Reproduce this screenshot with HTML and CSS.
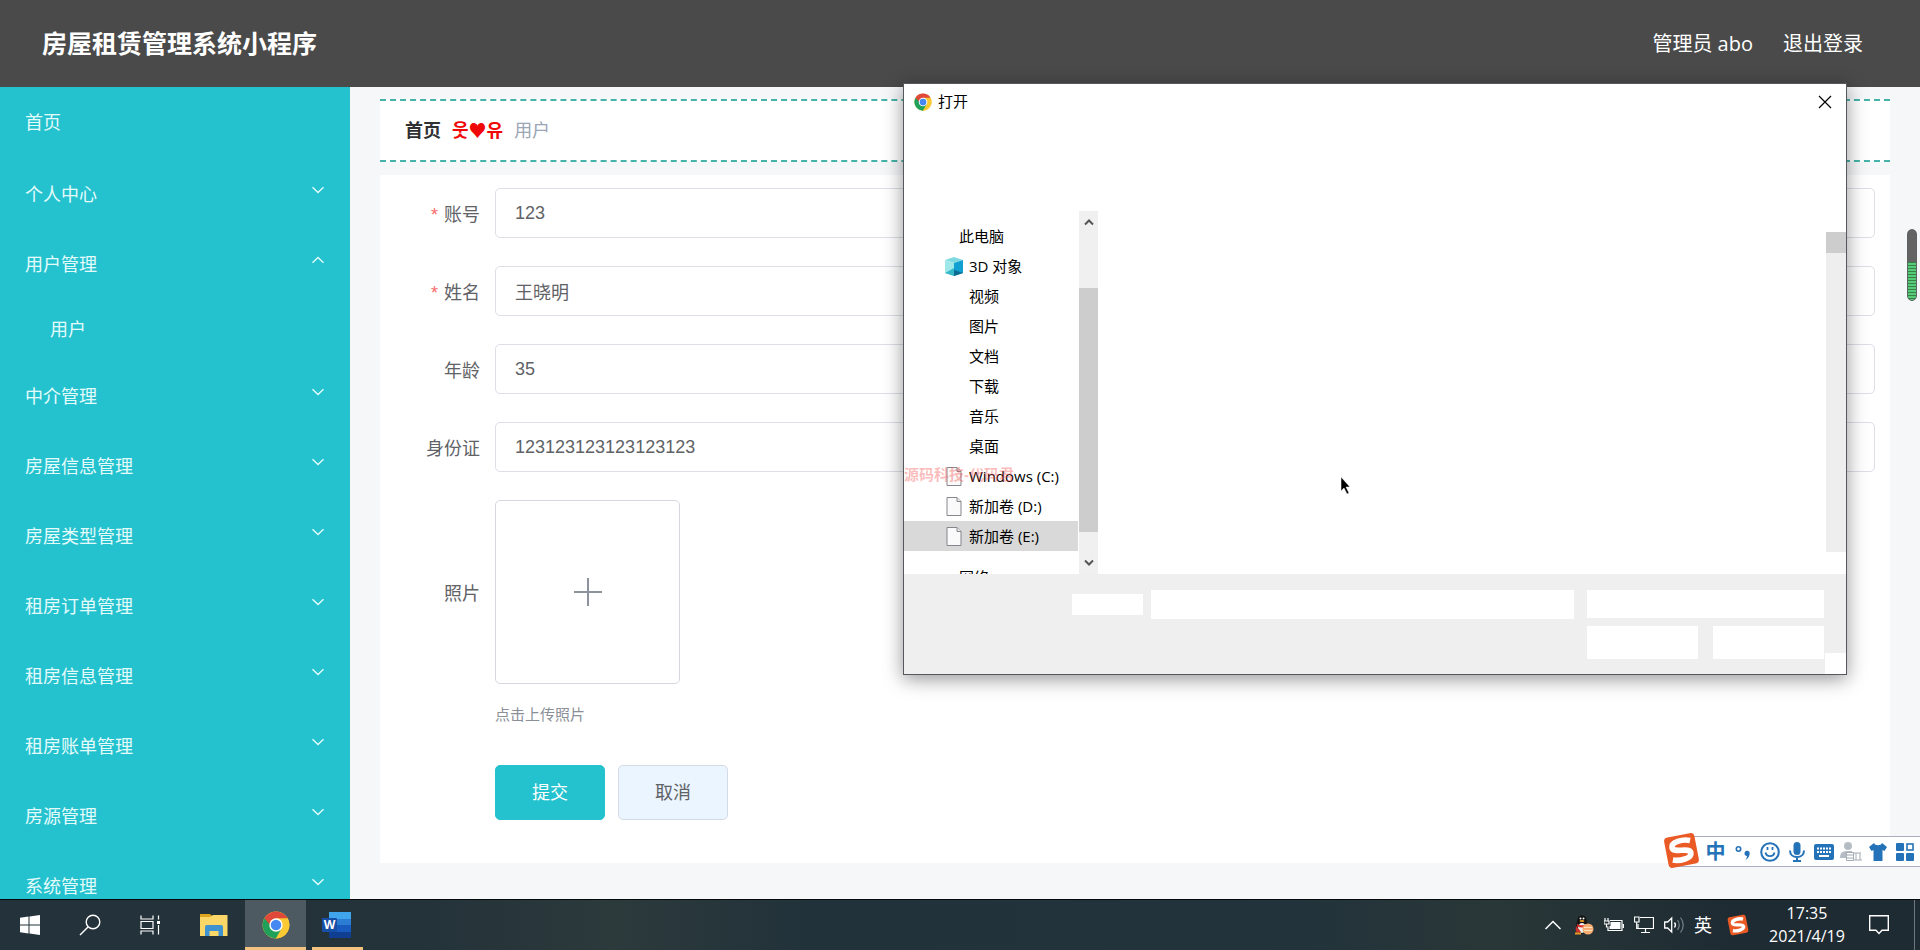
FILE: index.html
```html
<!DOCTYPE html>
<html lang="zh-CN">
<head>
<meta charset="utf-8">
<title>房屋租赁管理系统小程序</title>
<link rel="stylesheet" href="styles.css">
</head>
<body>
<svg class="defs" aria-hidden="true">
  <symbol id="chevron" viewBox="0 0 14 8"><path d="M1.5 1.2 7 6.6l5.500-5.400" fill="none" stroke="currentColor" stroke-width="1.400"/></symbol>
  <symbol id="chrome" viewBox="0 0 48 48">
    <circle cx="24" cy="24" r="23" fill="#fbc934"/>
    <path d="M24 24 4.100 12.500A23 23 0 0 0 24 47l10-17.300z" fill="#1fa15a"/>
    <path d="M24 24H14L4.100 12.500A23 23 0 0 1 43.900 12.500z" fill="#e0483a"/>
    <path d="M24 12.500h19.900A23 23 0 0 1 24 47l10-17.300z" fill="#fbc934"/>
    <circle cx="24" cy="24" r="11.500" fill="#fff"/>
    <circle cx="24" cy="24" r="9" fill="#4688f1"/>
  </symbol>
  <symbol id="file" viewBox="0 0 15 19"><path d="M.5.5h10l4 4v14H.5z" fill="#fafafa" stroke="#85878d"/><path d="M10.500.5v4h4" fill="#e8e8e8" stroke="#85878d"/></symbol>
  <symbol id="sogou" viewBox="0 0 36 36">
    <g transform="rotate(-11 18 18)"><rect x="3" y="3" width="30" height="30" rx="4" fill="#ea5a25"/>
    <path d="M28 10C21 7 9.500 8 9.500 13.500c0 6 17 2.500 17 8.500 0 5.500-12 6-18.500 3.500" fill="none" stroke="#fff" stroke-width="5.500"/></g>
  </symbol>
</svg>

<div class="desktop">
  <header class="topbar">
    <h1 class="topbar-title">房屋租赁管理系统小程序</h1>
    <nav class="topbar-links"><a href="#">管理员 abo</a><a href="#">退出登录</a></nav>
  </header>

  <div class="page">
    <nav class="sidebar">
      <a class="menu-item menu-home" href="#">首页</a>
      <button class="menu-item">个人中心<svg class="arrow"><use href="#chevron"/></svg></button>
      <button class="menu-item">用户管理<svg class="arrow arrow-up"><use href="#chevron"/></svg></button>
      <a class="menu-item menu-sub" href="#">用户</a>
      <button class="menu-item">中介管理<svg class="arrow"><use href="#chevron"/></svg></button>
      <button class="menu-item">房屋信息管理<svg class="arrow"><use href="#chevron"/></svg></button>
      <button class="menu-item">房屋类型管理<svg class="arrow"><use href="#chevron"/></svg></button>
      <button class="menu-item">租房订单管理<svg class="arrow"><use href="#chevron"/></svg></button>
      <button class="menu-item">租房信息管理<svg class="arrow"><use href="#chevron"/></svg></button>
      <button class="menu-item">租房账单管理<svg class="arrow"><use href="#chevron"/></svg></button>
      <button class="menu-item">房源管理<svg class="arrow"><use href="#chevron"/></svg></button>
      <button class="menu-item">系统管理<svg class="arrow"><use href="#chevron"/></svg></button>
    </nav>

    <main class="main">
      <nav class="breadcrumb"><a class="crumb-home" href="#">首页</a><span class="crumb-sep">웃♥유</span><span>用户</span></nav>
      <form class="card">
        <label class="label required" for="account">账号</label>
        <input class="field" id="account" value="123">
        <label class="label required" for="name">姓名</label>
        <input class="field" id="name" value="王晓明">
        <label class="label" for="age">年龄</label>
        <input class="field" id="age" value="35">
        <label class="label" for="idcard">身份证</label>
        <input class="field" id="idcard" value="123123123123123123">
        <label class="label" for="photo">照片</label>
        <button class="upload" id="photo" type="button" aria-label="上传照片">
          <svg width="30" height="30" viewBox="0 0 30 30"><path d="M15 1v28M1 15h28" stroke="#8c939d" stroke-width="2"/></svg>
        </button>
        <p class="tip">点击上传照片</p>
        <div class="actions">
          <button class="btn btn-primary" type="button">提交</button>
          <button class="btn" type="button">取消</button>
        </div>
      </form>
    </main>
  </div>

  <section class="dialog" aria-label="打开">
    <div class="dialog-head">
      <svg width="18" height="18"><use href="#chrome"/></svg>
      <span class="dialog-title">打开</span>
      <button class="dialog-close" aria-label="关闭"><svg width="14" height="14" viewBox="0 0 14 14"><path d="m1 1 12 12M13 1 1 13" stroke="#000" stroke-width="1.200"/></svg></button>
    </div>
    <div class="dialog-body">
      <ul class="tree">
        <li class="tree-root">此电脑</li>
        <li><svg width="18" height="19" viewBox="0 0 18 19"><path d="m0 3 9-3 9 3-9 3z" fill="#7fd9e0"/><path d="M0 3l9 3v13l-9-3z" fill="#9fe8ea"/><path d="m18 3-9 3v13l9-3z" fill="#0f9fd0"/><path d="m0 16 9-5v8z" fill="#35b9c9"/><path d="m9 13 9 3-9 3z" fill="#0b6b91"/></svg>3D 对象</li>
        <li>视频</li>
        <li>图片</li>
        <li>文档</li>
        <li>下载</li>
        <li>音乐</li>
        <li>桌面</li>
        <li><svg width="15" height="19"><use href="#file"/></svg>Windows (C:)</li>
        <li><svg width="15" height="19"><use href="#file"/></svg>新加卷 (D:)</li>
        <li class="selected"><svg width="15" height="19"><use href="#file"/></svg>新加卷 (E:)</li>
        <li class="tree-root tree-network">网络</li>
      </ul>
      <div class="tree-scroll">
        <svg class="scroll-arrow arrow-up" viewBox="0 0 10 8"><path d="m1 1.500 4 4 4-4" fill="none" stroke="#555" stroke-width="2"/></svg>
        <div class="scroll-thumb"></div>
        <svg class="scroll-arrow" viewBox="0 0 10 8"><path d="m1 1.500 4 4 4-4" fill="none" stroke="#555" stroke-width="2"/></svg>
      </div>
      <div class="file-list"><div class="list-scroll"><div class="list-thumb"></div></div></div>
    </div>
    <div class="dialog-foot">
      <div class="foot-label"></div>
      <input class="foot-name" aria-label="文件名">
      <div class="foot-side">
        <select class="foot-type" aria-label="文件类型"></select>
        <button class="foot-btn" aria-label="打开"></button>
        <button class="foot-btn" aria-label="取消"></button>
      </div>
      <div class="grip"></div>
    </div>
    <span class="watermark">源码科技-代码君</span>
  </section>

  <div class="meter"></div>
  <svg class="cursor" width="13" height="20" viewBox="0 0 13 20"><path d="M1 0v14l3-3 3 6 2-1-3-6h4z" fill="#000" stroke="#fff" stroke-width=".5"/></svg>

  <div class="ime">
    <svg class="ime-logo"><use href="#sogou"/></svg>
    <button class="ime-btn" aria-label="中文"><span>中</span></button>
    <button class="ime-btn" aria-label="标点"><svg width="16" height="20" viewBox="0 0 16 20"><circle cx="3.500" cy="7" r="2.200" fill="none" stroke="#2473b8" stroke-width="1.600"/><path d="M9.500 11a2.600 2.600 0 1 1 5.100 1c-.3 2.800-1.700 4.800-4.300 6 1.200-1.500 1.700-2.800 1.700-4A2.500 2.500 0 0 1 9.500 11z" fill="#2473b8"/></svg></button>
    <button class="ime-btn" aria-label="表情"><svg width="20" height="20" viewBox="0 0 20 20"><circle cx="10" cy="10" r="8.800" fill="none" stroke="#2473b8" stroke-width="2"/><path d="M5.500 10.500a4.600 4.600 0 0 0 9 0M7.500 5v3M12.500 5v3" fill="none" stroke="#2473b8" stroke-width="1.800"/></svg></button>
    <button class="ime-btn" aria-label="语音"><svg width="16" height="20" viewBox="0 0 16 20"><rect x="4.500" width="7" height="13" rx="3.500" fill="#2473b8"/><path d="M1 8.500c0 4 3 6.500 7 6.500s7-2.500 7-6.500M8 15v4M4 19h8" fill="none" stroke="#2473b8" stroke-width="2"/></svg></button>
    <button class="ime-btn" aria-label="键盘"><svg width="20" height="16" viewBox="0 0 20 16"><rect width="20" height="16" rx="2" fill="#2473b8"/><path d="M3 4.500h14M3 8h14" stroke="#fff" stroke-width="2" stroke-dasharray="2 1"/><path d="M5 12h10" stroke="#fff" stroke-width="2"/></svg></button>
    <button class="ime-btn" aria-label="用户"><svg width="22" height="20" viewBox="0 0 22 20"><circle cx="8" cy="4" r="4" fill="#b5bcc4"/><path d="M0 16c0-6 3-7 8-7h4v7z" fill="#b5bcc4"/><path d="M6.500 10.500h7v8h-7zM6.500 13h7M6.500 16h7M14 11h7M16 11v7M20 11v7M14 18h8" fill="#fff" stroke="#a4acb5"/></svg></button>
    <button class="ime-btn" aria-label="皮肤"><svg width="18" height="18" viewBox="0 0 18 18"><path d="M5 0c1 3 7 3 8 0l5 4-2.500 4-2-1v11h-9V7l-2 1L0 4z" fill="#2473b8"/></svg></button>
    <button class="ime-btn" aria-label="工具箱"><svg width="18" height="18" viewBox="0 0 18 18"><rect width="8" height="8" rx="1" fill="#2473b8"/><rect y="10" width="8" height="8" rx="1" fill="#2473b8"/><rect x="10" y="10" width="8" height="8" rx="1" fill="#2473b8"/><rect x="11" y="1" width="6" height="6" fill="none" stroke="#2473b8" stroke-width="1.600"/></svg></button>
  </div>

  <footer class="taskbar">
    <button class="task" aria-label="开始"><svg width="20" height="20" viewBox="0 0 20 20"><path d="M0 2.800 8.500 1.600v7.900H0zM9.500 1.400 20 0v9.500H9.500zM0 10.500h8.500v7.900L0 17.200zM9.500 10.500H20V20L9.500 18.600z" fill="#fff"/></svg></button>
    <button class="task" aria-label="搜索"><svg width="22" height="22" viewBox="0 0 22 22"><circle cx="14" cy="8" r="6.800" fill="none" stroke="#fff" stroke-width="1.400"/><path d="M9 13 1 21" stroke="#fff" stroke-width="1.400"/></svg></button>
    <button class="task" aria-label="任务视图"><svg width="20" height="20" viewBox="0 0 20 20"><path d="M1 .5v3.500h12V.5M1 19.500V16h12v3.500M1 6.500h12v7H1zM18.500.5v4M18.500 10v9.500" fill="none" stroke="#fff" stroke-width="1.200"/><path d="M17 6h3v3h-3z" fill="#fff"/></svg></button>
    <button class="task task-app" aria-label="文件资源管理器"><svg width="28" height="24" viewBox="0 0 28 24"><path d="M0 1h10l2 2h15v20H0z" fill="#e0a51f"/><path d="M0 4h10l3-2h14.500v21H0z" fill="#fbd768"/><path d="M5 23V14q0-2 2-2h14q2 0 2 2v9h-4.500v-5h-9v5z" fill="#3e92d0"/></svg></button>
    <button class="task task-app active" aria-label="Chrome"><svg width="28" height="28"><use href="#chrome"/></svg></button>
    <button class="task task-app running" aria-label="Word"><svg width="30" height="28" viewBox="0 0 30 28"><path d="M7 1h22v7H7z" fill="#41a5ee"/><path d="M7 8h22v6H7z" fill="#2b7cd3"/><path d="M7 14h22v7H7z" fill="#185abd"/><path d="M7 21h22v6H7z" fill="#103f91"/><rect y="7" width="15" height="14" rx="1" fill="#174ea6"/><text x="7.500" y="18" class="word-letter">W</text></svg></button>

    <div class="tray">
      <svg class="tray-more" width="16" height="10" viewBox="0 0 16 10"><path d="m.5 9 7.500-7.500L15.500 9" fill="none" stroke="#fff" stroke-width="1.500"/></svg>
      <svg width="20" height="20" viewBox="0 0 20 20"><ellipse cx="8" cy="11" rx="6" ry="8" fill="#171717"/><circle cx="8" cy="5" r="4.500" fill="#111"/><ellipse cx="8" cy="13" rx="4" ry="5" fill="#eee"/><path d="M3 9q5 2.500 10 0v2.500q-5 2-10 0z" fill="#d9312c"/><circle cx="6.500" cy="3.500" r="1" fill="#fff"/><circle cx="9.500" cy="3.500" r="1" fill="#fff"/><ellipse cx="8" cy="6" rx="2.500" ry="1" fill="#e99a24"/><path d="M2 11q3 3 5 6l-4 1q-2-2-1-7z" fill="#c9302c"/><path d="M1 18.500h6" stroke="#e99a24" stroke-width="2"/><circle cx="14" cy="14" r="5.500" fill="#f3ad72"/><path d="M10 12.500h8M10 15.500h8" stroke="#ffe0bd"/></svg>
      <svg width="20" height="16" viewBox="0 0 20 16"><path d="M1 1v3M4 1v3M0 4h5v3H0zM2.500 7v3h2" fill="none" stroke="#fff" stroke-width="1.200"/><path d="M6 3.500h12v10H4v-3" fill="none" stroke="#fff" stroke-width="1.200"/><path d="M6.500 5h10v7h-11V9h1z" fill="#fff"/><path d="M19.300 7v4" stroke="#fff" stroke-width="1.400"/></svg>
      <svg width="20" height="18" viewBox="0 0 20 18"><path d="M6 1.500h13.500v11H4V8M11.500 12.500V17M7 16.500h9" fill="none" stroke="#fff" stroke-width="1.200"/><path d="M.5 1h4.500v5H.5zM2.700 6v6.500H5" fill="none" stroke="#fff" stroke-width="1.200"/></svg>
      <svg width="20" height="18" viewBox="0 0 20 18"><path d="M.7 6h3l4-4v14l-4-4h-3z" fill="none" stroke="#fff" stroke-width="1.300"/><path d="M10.500 6.500q2 2.500 0 5" fill="none" stroke="#fff" stroke-width="1.300"/><path d="M13.500 4q3.500 5 0 10M16.500 1.500q5.500 7.500 0 15" fill="none" stroke="#75828a" stroke-width="1.200"/></svg>
      <span class="tray-lang">英</span>
      <svg class="tray-sogou" width="22" height="22"><use href="#sogou"/></svg>
      <div class="clock"><span>17:35</span><span>2021/4/19</span></div>
      <svg class="tray-note" width="20" height="20" viewBox="0 0 20 20"><path d="M.7.7h18.600v14.600h-6.300L10 18.500 7 15.300H.7z" fill="none" stroke="#fff" stroke-width="1.400"/></svg>
      <span class="tray-edge"></span>
    </div>
  </footer>
</div>
</body>
</html>
```
FILE: styles.css
```css
* { box-sizing: border-box; }
body {
  margin: 0;
  font-family: "Liberation Sans", "Noto Sans CJK SC", sans-serif;
  font-size: 18px;
  color: #606266;
}
button, input, select { font: inherit; color: inherit; margin: 0; padding: 0; border: 0; background: none; }
a { color: inherit; text-decoration: none; }
svg { display: block; flex: none; }
.defs { position: absolute; width: 0; height: 0; }

.desktop { position: relative; display: flex; flex-direction: column; height: 100vh; overflow: hidden; }

.topbar {
  flex: none;
  display: flex;
  align-items: center;
  justify-content: space-between;
  height: 87px;
  padding: 0 57px 3px 42px;
  background: #4a4a4a;
  color: #fff;
}
.topbar-title { margin: 0; font-size: 25px; font-weight: 700; }
.topbar-links { display: flex; gap: 30px; font-family: "Open Sans", "Noto Sans CJK SC", sans-serif; font-size: 20px; }

.page { flex: 1; min-height: 0; display: flex; }

.sidebar { flex: none; width: 350px; overflow: hidden; background: #24c2ce; color: #e4fbfc; }
.menu-item {
  display: flex;
  align-items: center;
  justify-content: space-between;
  width: 100%;
  height: 70px;
  padding: 0 25px 2px;
  text-align: left;
}
.menu-home { margin-bottom: 2px; }
.menu-sub { height: 62px; padding: 0 50px 5px; }
.arrow { width: 14px; height: 8px; margin-bottom: 6px; }
.arrow-up { transform: rotate(180deg); }

.main { flex: 1; min-width: 0; padding: 12px 30px 0; background: #f5f7f9; }
.breadcrumb {
  display: flex;
  align-items: center;
  gap: 11px;
  height: 63px;
  margin-bottom: 13px;
  padding: 0 25px 3px;
  border-top: 2px dashed #45b3a9;
  border-bottom: 2px dashed #45b3a9;
  background: #fff;
  color: #9aa5b5;
}
.crumb-home { color: #303133; font-weight: 700; }
.crumb-sep { color: #f00808; font-family: "Noto Sans CJK KR", sans-serif; font-weight: 700; }

.card {
  display: grid;
  grid-template-columns: 100px 1fr;
  align-items: center;
  column-gap: 15px;
  row-gap: 28px;
  padding: 13px 15px 43px 0;
  background: #fff;
}
.label { text-align: right; }
.required::before { content: "*"; margin-right: 6px; color: #f56c6c; }
.field {
  width: 100%;
  height: 50px;
  padding: 0 19px;
  border: 1px solid #dcdfe6;
  border-radius: 5px;
  background: #fff;
}
.upload {
  display: grid;
  place-items: center;
  width: 185px;
  height: 184px;
  border: 1px solid #d5d8de;
  border-radius: 5px;
}
.tip { grid-column: 2; margin: -8px 0 11px; font-size: 15px; line-height: 22px; color: #8b8f97; }
.actions { grid-column: 2; display: flex; gap: 13px; }
.btn { width: 110px; height: 55px; padding-bottom: 4px; border: 1px solid #d5dbe4; border-radius: 5px; background: #eaf5ff; }
.btn-primary { border-color: #24c2ce; background: #24c2ce; color: #fff; }

.dialog {
  position: absolute;
  top: 83px;
  right: 73px;
  width: 944px;
  display: flex;
  flex-direction: column;
  border: 1px solid #55585c;
  background: #fff;
  box-shadow: 0 4px 18px rgba(0, 0, 0, .42);
  font-family: "Open Sans", "Noto Sans CJK SC", sans-serif;
  font-size: 15px;
  color: #000;
}
.dialog-head { display: flex; align-items: center; gap: 6px; height: 36px; margin-bottom: 91px; padding: 0 14px 0 10px; }
.dialog-title { flex: 1; line-height: 20px; padding-bottom: 2px; }
.dialog-body { display: flex; height: 363px; }
.tree { flex: none; width: 174px; margin: 0; padding: 10px 0 0; overflow: hidden; list-style: none; }
.tree li { display: flex; align-items: center; height: 30px; padding-left: 65px; line-height: 30px; }
.tree svg { width: 18px; margin: 0 6px 0 -24px; }
.tree .tree-root { padding-left: 55px; }
.tree .selected { background: #d9d9d9; }
.tree .tree-network { margin-top: 11px; }
.tree-scroll {
  flex: none;
  display: flex;
  flex-direction: column;
  align-items: center;
  justify-content: space-between;
  width: 19px;
  margin-left: 1px;
  padding: 7px 0;
  background: #f0f0f0;
}
.scroll-arrow { width: 10px; height: 8px; }
.scroll-thumb { width: 19px; height: 244px; margin-top: 34px; background: #cdcdcd; }
.file-list { flex: 1; display: flex; justify-content: flex-end; padding: 21px 0 22px; }
.list-scroll { width: 20px; background: #eee; }
.list-thumb { height: 21px; background: #cdcdcd; }
.dialog-foot {
  position: relative;
  display: flex;
  align-items: flex-start;
  height: 100px;
  padding: 16px 22px 0 168px;
  background: #efefef;
}
.foot-label { width: 71px; height: 21px; margin: 4px 8px 0 0; background: #fff; }
.foot-name { flex: 1; min-width: 0; height: 29px; margin-right: 13px; background: #fff; }
.foot-side { display: grid; grid-template-columns: 111px 111px; column-gap: 15px; row-gap: 8px; }
.foot-type { grid-column: 1 / 3; height: 28px; background: #fff; appearance: none; }
.foot-btn { height: 33px; background: #fff; }
.grip { position: absolute; right: 0; bottom: 0; width: 21px; height: 21px; background: #fff; }
.watermark {
  position: absolute;
  top: 380px;
  left: 0;
  font-family: "Liberation Sans", "Noto Sans CJK SC", sans-serif;
  font-weight: 700;
  line-height: 22px;
  color: rgba(245, 60, 60, .34);
}

.meter {
  position: absolute;
  top: 229px;
  right: 3px;
  width: 10px;
  height: 72px;
  border: 1px solid #5f6462;
  border-radius: 5px;
  background:
    linear-gradient(#636363 32px, transparent 32px),
    repeating-linear-gradient(#56cc78 0 2px, #36804c 2px 3px);
}
.cursor { position: absolute; left: 1340px; top: 477px; }

.ime {
  position: absolute;
  right: 0;
  bottom: 83px;
  display: flex;
  height: 31px;
  padding: 1px 2px 0 26px;
  border-top: 1px solid #abadc0;
  border-bottom: 1px solid #abadc0;
  background: #fff;
}
.ime-logo { position: absolute; left: -13px; top: -5px; width: 37px; height: 37px; }
.ime-btn { display: grid; place-items: center; width: 27px; color: #2473b8; font-size: 20px; font-weight: 700; line-height: 28px; }

.taskbar {
  flex: none;
  display: flex;
  height: 51px;
  border-top: 1px solid #05090b;
  background: linear-gradient(90deg, #24333b 0, #24323a 22%, #2c3a3c 32%, #22323a 42%, #22333b 68%, #2a3738 78%, #1e2b33 90%);
  color: #fff;
}
.task { display: grid; place-items: center; width: 60px; }
.task-app { position: relative; margin-left: 1px; }
.task-app:nth-child(4) { margin-left: 4px; }
.active { width: 61px; background: #4e5a62; }
.active::after, .running::after { content: ""; position: absolute; bottom: 0; left: 0; right: 0; height: 3px; background: #f4c27f; }
.running::after { left: 5px; right: 4px; }
.word-letter { fill: #fff; font: 700 12px "Open Sans", sans-serif; text-anchor: middle; }
.tray { display: flex; align-items: center; gap: 10px; margin-left: auto; font-family: "Open Sans", "Noto Sans CJK SC", sans-serif; }
.tray-more { margin-right: 3px; }
.tray-sogou { margin-left: 5px; }
.tray-lang { line-height: 24px; padding-bottom: 1px; }
.clock { display: flex; flex-direction: column; align-items: center; width: 76px; margin: 0 14px 0 10px; font-size: 16px; line-height: 23px; }
.tray-edge { align-self: stretch; width: 1px; margin: 0 5px 0 15px; background: #6d777c; }
```
